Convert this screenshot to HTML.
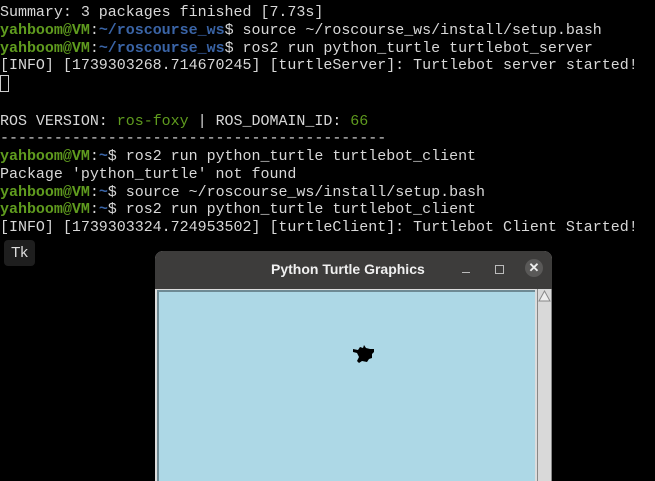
<!DOCTYPE html>
<html><head><style>
html,body{margin:0;width:655px;height:481px;background:#000;overflow:hidden;}
body{position:relative;font-family:"Liberation Mono",monospace;}
.t{position:absolute;left:0;top:4px;font-size:15px;line-height:17.75px;color:#d8d8d8;white-space:pre;letter-spacing:-0.02px}
.g{color:#5f9b1e;font-weight:bold}
.b{color:#3a64a6;font-weight:bold}
.gn{color:#5f9b1e}
.cur{display:inline-block;width:7px;height:15px;border:1px solid #ccc;vertical-align:-3px}
.tk{position:absolute;left:4px;top:240px;width:31px;height:26px;background:#1e1e1e;border-radius:4px;color:#ddd;font-family:"Liberation Sans",sans-serif;font-size:15px;line-height:26px;text-align:center}
.win{position:absolute;left:155px;top:251px;width:397px;height:230px;background:#dcdcdc;border-radius:8px 8px 0 0;overflow:hidden}
.tb{height:38px;background:#3d3c3b;position:relative}
.title{position:absolute;left:116px;top:10px;color:#f0f0f0;font-family:"Liberation Sans",sans-serif;font-weight:bold;font-size:14px}
.cv{position:absolute;left:2px;top:39px;width:376px;height:200px;background:#add8e6;border-top:2px solid #6e8a94;border-left:2px solid #6e8a94}
.sb{position:absolute;left:382px;top:38px;width:13px;height:200px;background:#d9d9d9;border-left:1px solid #888;border-right:1px solid #888}
</style></head><body>
<div class="t">Summary: 3 packages finished [7.73s]
<span class="g">yahboom@VM</span>:<span class="b">~/roscourse_ws</span>$ source ~/roscourse_ws/install/setup.bash
<span class="g">yahboom@VM</span>:<span class="b">~/roscourse_ws</span>$ ros2 run python_turtle turtlebot_server
[INFO] [1739303268.714670245] [turtleServer]: Turtlebot server started!
<span class="cur"></span>

ROS VERSION: <span class="gn">ros-foxy</span> | ROS_DOMAIN_ID: <span class="gn">66</span>
-------------------------------------------
<span class="g">yahboom@VM</span>:<span class="b">~</span>$ ros2 run python_turtle turtlebot_client
Package 'python_turtle' not found
<span class="g">yahboom@VM</span>:<span class="b">~</span>$ source ~/roscourse_ws/install/setup.bash
<span class="g">yahboom@VM</span>:<span class="b">~</span>$ ros2 run python_turtle turtlebot_client
[INFO] [1739303324.724953502] [turtleClient]: Turtlebot Client Started!</div>
<div class="tk">Tk</div>
<div class="win">
 <div class="tb">
  <div class="title">Python Turtle Graphics</div>
  <div style="position:absolute;left:307px;top:21px;width:8px;height:1px;background:#bbb"></div>
  <div style="position:absolute;left:340px;top:14px;width:7px;height:7px;border:1px solid #bbb"></div>
  <div style="position:absolute;left:370px;top:8px;width:18px;height:18px;border-radius:50%;background:#5a5958;color:#eee;font:bold 13px/18px 'Liberation Sans',sans-serif;text-align:center">✕</div>
 </div>
 <div class="cv">
  <svg style="position:absolute;left:192px;top:52px" width="26" height="22" viewBox="0 0 26 22"><path d="M2 5 L7 6 L9 3 L12 4 L13 1 L15 4 L19 5 L23 5 L23 8 L21 10 L21 14 L18 15 L16 18 L11 17 L8 19 L6 17 L8 13 L6 9 L2 8Z" fill="#000"/></svg>
 </div>
 <div class="sb"><svg width="13" height="14"><path d="M1 12 L6.5 2 L12 12Z" fill="#eee" stroke="#888"/></svg></div>
</div>
</body></html>
